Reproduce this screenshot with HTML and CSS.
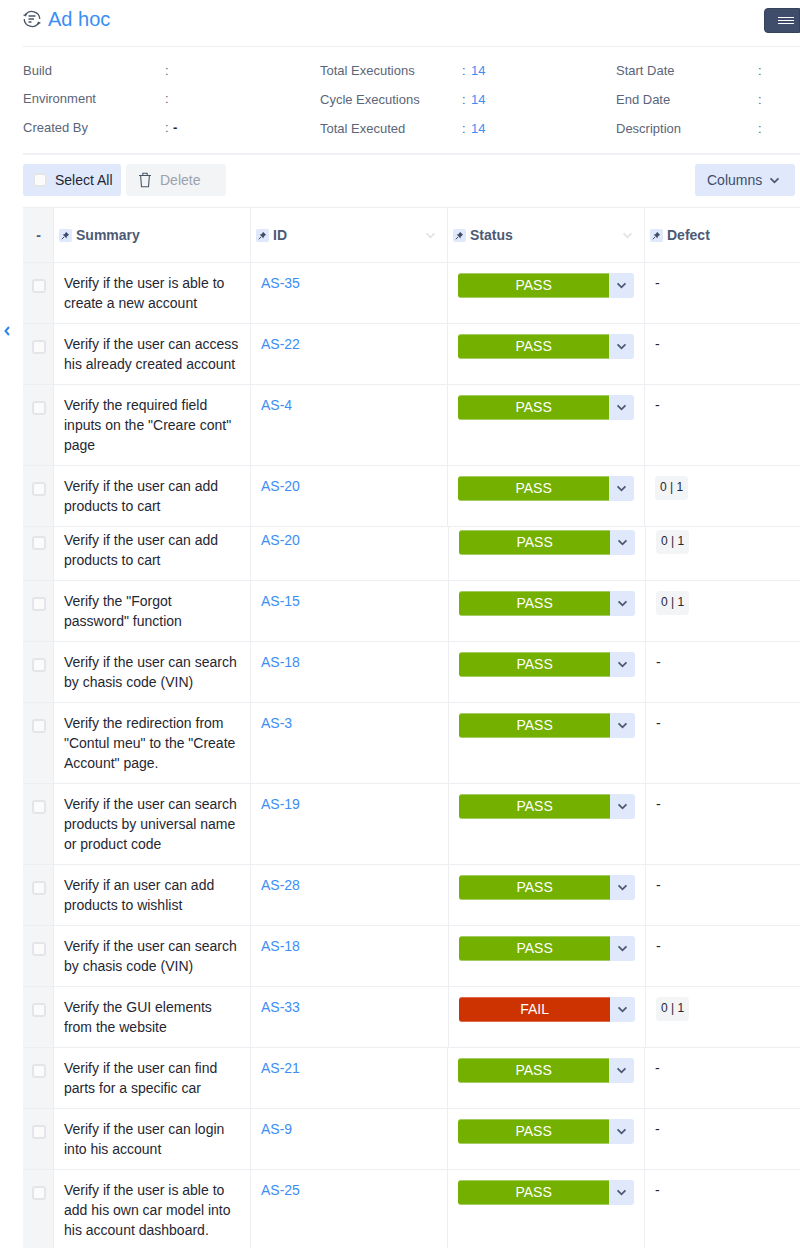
FILE: index.html
```html
<!DOCTYPE html>
<html lang="en">

<head>
    <meta charset="UTF-8">
    <meta name="viewport" content="width=device-width, initial-scale=1.0">
    <title>Ad hoc</title>
    <link rel="stylesheet" href="styles.css">
</head>

<body>
    <svg class="icon-defs" width="0" height="0">
        <symbol id="pin" viewBox="0 0 13 13">
            <path d="M7 2.8l3.2 3.2-1 .3-1.6 1.6-.1 1.5-3.9-3.9 1.5-.1 1.6-1.6z" fill="#3f4d6b"/>
            <path d="M5 8l-2.2 2.2" stroke="#3f4d6b" fill="none"/>
        </symbol>
        <symbol id="chev" viewBox="0 0 12 8">
            <path d="M1.5 1.5L6 6l4.5-4.5" fill="none" stroke="currentColor" stroke-width="2"/>
        </symbol>
    </svg>

    <div class="page">
        <!-- Title bar -->
        <div class="title-bar">
            <svg class="cycle-icon" viewBox="0 0 18 18" width="18" height="18" fill="none" stroke="#4a5568" stroke-width="1.3">
                <path d="M2.4 5.2A7.8 7.8 0 0 1 16.8 9"/>
                <path d="M15.6 12.8A7.8 7.8 0 0 1 1.2 9"/>
                <path d="M.6 4.8l2 .9.7-2.4"/>
                <path d="M17.4 13.2l-2-.9-.7 2.4"/>
                <path d="M5.5 6h7M5.5 9h5.5M5.5 12h3"/>
            </svg>
            <h1 class="title">Ad hoc</h1>
            <button class="menu-btn">
                <span></span><span></span><span></span>
            </button>
        </div>

        <!-- Cycle details -->
        <div class="details">
            <div class="detail-col first">
                <div class="detail"><span class="label">Build</span><span class="colon">:</span></div>
                <div class="detail"><span class="label">Environment</span><span class="colon">:</span></div>
                <div class="detail"><span class="label">Created By</span><span class="colon">:</span><b class="dash">-</b></div>
            </div>
            <div class="detail-col">
                <div class="detail"><span class="label">Total Executions</span><span class="colon">:</span><a class="count">14</a></div>
                <div class="detail"><span class="label">Cycle Executions</span><span class="colon">:</span><a class="count">14</a></div>
                <div class="detail"><span class="label">Total Executed</span><span class="colon">:</span><a class="count">14</a></div>
            </div>
            <div class="detail-col">
                <div class="detail"><span class="label">Start Date</span><span class="colon">:</span></div>
                <div class="detail"><span class="label">End Date</span><span class="colon">:</span></div>
                <div class="detail"><span class="label">Description</span><span class="colon">:</span></div>
            </div>
        </div>

        <!-- Toolbar -->
        <div class="toolbar">
            <button class="btn btn-select"><span class="check"></span>Select All</button>
            <button class="btn btn-delete">
                <svg viewBox="0 0 14 16" width="14" height="16" fill="none" stroke="#4a5568" stroke-width="1.1">
                    <path d="M1 3.5h12M4.8 3.5V1.2h4.4v2.3M2.6 3.5l.9 11.3h7l.9-11.3"/>
                </svg>
                Delete
            </button>
            <button class="btn btn-columns">Columns <svg class="chev"><use href="#chev"/></svg></button>
        </div>

        <!-- Executions grid -->
        <div class="grid">
            <div class="row head">
                <div class="cell check-cell">-</div>
                <div class="cell"><svg class="pin"><use href="#pin"/></svg>Summary</div>
                <div class="cell"><svg class="pin"><use href="#pin"/></svg>ID<svg class="sort"><use href="#chev"/></svg></div>
                <div class="cell"><svg class="pin"><use href="#pin"/></svg>Status<svg class="sort"><use href="#chev"/></svg></div>
                <div class="cell"><svg class="pin"><use href="#pin"/></svg>Defect</div>
            </div>

            <div class="row">
                <div class="cell check-cell"><span class="check"></span></div>
                <div class="cell summary">Verify if the user is able to create a new account</div>
                <div class="cell"><a class="issue">AS-35</a></div>
                <div class="cell"><div class="status"><span class="pill pass">PASS</span><span class="drop"><svg class="chev"><use href="#chev"/></svg></span></div></div>
                <div class="cell defect">-</div>
            </div>
            <div class="row">
                <div class="cell check-cell"><span class="check"></span></div>
                <div class="cell summary">Verify if the user can access his already created account</div>
                <div class="cell"><a class="issue">AS-22</a></div>
                <div class="cell"><div class="status"><span class="pill pass">PASS</span><span class="drop"><svg class="chev"><use href="#chev"/></svg></span></div></div>
                <div class="cell defect">-</div>
            </div>
            <div class="row">
                <div class="cell check-cell"><span class="check"></span></div>
                <div class="cell summary">Verify the required field inputs on the "Creare cont" page</div>
                <div class="cell"><a class="issue">AS-4</a></div>
                <div class="cell"><div class="status"><span class="pill pass">PASS</span><span class="drop"><svg class="chev"><use href="#chev"/></svg></span></div></div>
                <div class="cell defect">-</div>
            </div>
            <div class="row">
                <div class="cell check-cell"><span class="check"></span></div>
                <div class="cell summary">Verify if the user can add products to cart</div>
                <div class="cell"><a class="issue">AS-20</a></div>
                <div class="cell"><div class="status"><span class="pill pass">PASS</span><span class="drop"><svg class="chev"><use href="#chev"/></svg></span></div></div>
                <div class="cell defect"><span class="badge">0 | 1</span></div>
            </div>
            <div class="row seam shift">
                <div class="cell check-cell"><span class="check"></span></div>
                <div class="cell summary">Verify if the user can add products to cart</div>
                <div class="cell"><a class="issue">AS-20</a></div>
                <div class="cell"><div class="status"><span class="pill pass">PASS</span><span class="drop"><svg class="chev"><use href="#chev"/></svg></span></div></div>
                <div class="cell defect"><span class="badge">0 | 1</span></div>
            </div>
            <div class="row shift">
                <div class="cell check-cell"><span class="check"></span></div>
                <div class="cell summary">Verify the "Forgot password" function</div>
                <div class="cell"><a class="issue">AS-15</a></div>
                <div class="cell"><div class="status"><span class="pill pass">PASS</span><span class="drop"><svg class="chev"><use href="#chev"/></svg></span></div></div>
                <div class="cell defect"><span class="badge">0 | 1</span></div>
            </div>
            <div class="row shift">
                <div class="cell check-cell"><span class="check"></span></div>
                <div class="cell summary">Verify if the user can search by chasis code (VIN)</div>
                <div class="cell"><a class="issue">AS-18</a></div>
                <div class="cell"><div class="status"><span class="pill pass">PASS</span><span class="drop"><svg class="chev"><use href="#chev"/></svg></span></div></div>
                <div class="cell defect">-</div>
            </div>
            <div class="row shift">
                <div class="cell check-cell"><span class="check"></span></div>
                <div class="cell summary">Verify the redirection from "Contul meu" to the "Create Account" page.</div>
                <div class="cell"><a class="issue">AS-3</a></div>
                <div class="cell"><div class="status"><span class="pill pass">PASS</span><span class="drop"><svg class="chev"><use href="#chev"/></svg></span></div></div>
                <div class="cell defect">-</div>
            </div>
            <div class="row shift">
                <div class="cell check-cell"><span class="check"></span></div>
                <div class="cell summary">Verify if the user can search products by universal name or product code</div>
                <div class="cell"><a class="issue">AS-19</a></div>
                <div class="cell"><div class="status"><span class="pill pass">PASS</span><span class="drop"><svg class="chev"><use href="#chev"/></svg></span></div></div>
                <div class="cell defect">-</div>
            </div>
            <div class="row shift">
                <div class="cell check-cell"><span class="check"></span></div>
                <div class="cell summary">Verify if an user can add products to wishlist</div>
                <div class="cell"><a class="issue">AS-28</a></div>
                <div class="cell"><div class="status"><span class="pill pass">PASS</span><span class="drop"><svg class="chev"><use href="#chev"/></svg></span></div></div>
                <div class="cell defect">-</div>
            </div>
            <div class="row shift">
                <div class="cell check-cell"><span class="check"></span></div>
                <div class="cell summary">Verify if the user can search by chasis code (VIN)</div>
                <div class="cell"><a class="issue">AS-18</a></div>
                <div class="cell"><div class="status"><span class="pill pass">PASS</span><span class="drop"><svg class="chev"><use href="#chev"/></svg></span></div></div>
                <div class="cell defect">-</div>
            </div>
            <div class="row shift">
                <div class="cell check-cell"><span class="check"></span></div>
                <div class="cell summary">Verify the GUI elements from the website</div>
                <div class="cell"><a class="issue">AS-33</a></div>
                <div class="cell"><div class="status"><span class="pill fail">FAIL</span><span class="drop"><svg class="chev"><use href="#chev"/></svg></span></div></div>
                <div class="cell defect"><span class="badge">0 | 1</span></div>
            </div>
            <div class="row">
                <div class="cell check-cell"><span class="check"></span></div>
                <div class="cell summary">Verify if the user can find parts for a specific car</div>
                <div class="cell"><a class="issue">AS-21</a></div>
                <div class="cell"><div class="status"><span class="pill pass">PASS</span><span class="drop"><svg class="chev"><use href="#chev"/></svg></span></div></div>
                <div class="cell defect">-</div>
            </div>
            <div class="row">
                <div class="cell check-cell"><span class="check"></span></div>
                <div class="cell summary">Verify if the user can login into his account</div>
                <div class="cell"><a class="issue">AS-9</a></div>
                <div class="cell"><div class="status"><span class="pill pass">PASS</span><span class="drop"><svg class="chev"><use href="#chev"/></svg></span></div></div>
                <div class="cell defect">-</div>
            </div>
            <div class="row">
                <div class="cell check-cell"><span class="check"></span></div>
                <div class="cell summary">Verify if the user is able to add his own car model into his account dashboard.</div>
                <div class="cell"><a class="issue">AS-25</a></div>
                <div class="cell"><div class="status"><span class="pill pass">PASS</span><span class="drop"><svg class="chev"><use href="#chev"/></svg></span></div></div>
                <div class="cell defect">-</div>
            </div>
        </div>

        <!-- Side panel toggle -->
        <svg class="side-toggle" viewBox="0 0 8 12" width="8" height="12">
            <path d="M6 2L2.5 6 6 10" fill="none" stroke="#2f86ea" stroke-width="2"/>
        </svg>
    </div>
</body>

</html>
```

FILE: styles.css
```css
* {
    margin: 0;
    padding: 0;
    box-sizing: border-box;
}

body {
    background-color: #fff;
    color: #1f2733;
    font-family: "Liberation Sans", Arial, sans-serif;
    font-size: 14px;
    width: 800px;
    height: 1248px;
    overflow: hidden;
}

.icon-defs {
    position: absolute;
}

.page {
    position: relative;
    padding-left: 23px;
}

/* Title bar */
.title-bar {
    display: flex;
    align-items: center;
    height: 47px;
    padding-bottom: 8px;
    border-bottom: 1px solid #eceef1;
}

.cycle-icon {
    margin-right: 7px;
}

.title {
    font-size: 20px;
    font-weight: 400;
    color: #3b8ef5;
}

.menu-btn {
    margin-left: auto;
    margin-top: 3px;
    width: 36px;
    height: 25px;
    background-color: #3f4d6b;
    border: 1px solid #364259;
    border-radius: 4px 0 0 4px;
    display: flex;
    flex-direction: column;
    align-items: flex-end;
    justify-content: center;
    gap: 2px;
    padding-right: 5px;
}

.menu-btn span {
    display: block;
    width: 16px;
    height: 1px;
    background-color: #fff;
}

/* Details */
.details {
    display: grid;
    grid-template-columns: 297px 296px 184px;
    padding-top: 9px;
    height: 108px;
    border-bottom: 2px solid #f0f1f4;
}

.detail {
    display: flex;
    align-items: center;
    height: 29px;
    font-size: 13px;
    color: #5b6579;
}

.first .detail {
    height: 28.5px;
}

.label {
    width: 142px;
}

.colon {
    width: 8px;
}

.dash {
    color: #1f2733;
}

.count {
    color: #3b8ef5;
    margin-left: 1px;
}

/* Toolbar */
.toolbar {
    display: flex;
    gap: 5px;
    padding: 9px 5px 11px 0;
}

.btn {
    display: flex;
    align-items: center;
    height: 32px;
    border: none;
    border-radius: 3px;
    font-family: inherit;
    font-size: 14px;
}

.btn-select {
    width: 98px;
    padding-left: 10px;
    gap: 8px;
    background-color: #dfe9fb;
    color: #1f2733;
}

.btn-delete {
    width: 100px;
    padding-left: 12px;
    gap: 8px;
    background-color: #f3f4f6;
    color: #9aa2ae;
}

.btn-columns {
    width: 100px;
    margin-left: auto;
    padding-left: 12px;
    gap: 7px;
    background-color: #dfe9fb;
    color: #3f4d6b;
}

.chev {
    width: 11px;
    height: 7px;
    color: #4a5874;
}

.check {
    display: block;
    width: 14px;
    height: 14px;
    background-color: #fbfbfc;
    border: 2px solid #e3e5e9;
    border-radius: 3px;
}

/* Grid */
.grid {
    width: 830px;
    border-top: 1px solid #eceef1;
}

.row {
    display: grid;
    grid-template-columns: 31px 197px 197px 197px 208px;
    border-bottom: 1px solid #eceef1;
}

.shift {
    grid-template-columns: 31px 197px 198px 197px 207px;
}

.cell {
    border-right: 1px solid #eceef1;
    padding: 10px;
    line-height: 20px;
}

.seam .cell {
    padding-top: 3px;
    padding-bottom: 10px;
}

.seam .check-cell {
    padding-top: 9px;
}

.check-cell {
    background-color: #f4f5f7;
    display: flex;
    justify-content: center;
    padding: 16px 0 0 1px;
}

.head .cell {
    display: flex;
    align-items: center;
    height: 54px;
    padding: 0 0 0 5px;
    font-weight: 700;
    color: #4d5a75;
}

.head .check-cell {
    justify-content: center;
    padding: 0 0 0 1px;
}

.pin {
    width: 13px;
    height: 13px;
    margin-right: 4px;
    background-color: #dfe9fb;
    border-radius: 2px;
}

.sort {
    width: 11px;
    height: 7px;
    margin-left: auto;
    margin-right: 11px;
    color: #e1e3e8;
}

.issue {
    color: #3b8ef5;
}

.status {
    display: flex;
    height: 25px;
}

.pill {
    width: 152px;
    border-radius: 3px 0 0 3px;
    border-top: 1px solid;
    border-bottom: 1px solid;
    color: #fff;
    text-align: center;
    line-height: 23px;
}

.pass {
    background-color: #73b000;
    border-color: #a5cd66;
}

.fail {
    background-color: #cc3300;
    border-color: #e06a4a;
}

.drop {
    width: 25px;
    display: flex;
    align-items: center;
    justify-content: center;
    background-color: #dfe9fb;
    border-radius: 0 3px 3px 0;
}

.defect {
    color: #1f2733;
}

.badge {
    display: inline-block;
    height: 24px;
    line-height: 22px;
    padding: 0 5px;
    font-size: 12px;
    background-color: #f3f4f6;
    border-radius: 4px;
}

.side-toggle {
    position: absolute;
    left: 3px;
    top: 325px;
}
```
